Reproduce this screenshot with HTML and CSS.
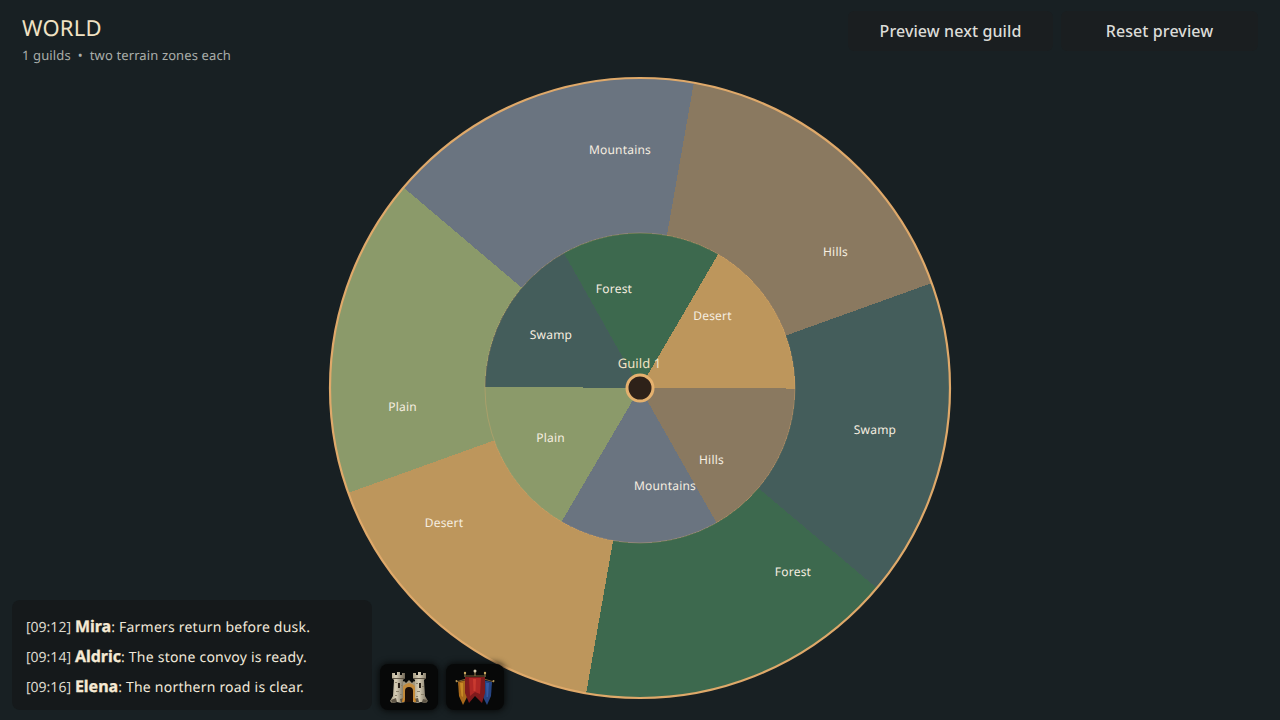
FILE: index.html
```html
<!DOCTYPE html>
<html lang="en">
<head>
<meta charset="utf-8">
<title>World</title>
<link rel="stylesheet" href="styles.css">
</head>
<body>
<main class="page">
  <svg class="wheel" viewBox="0 0 1280 720" width="1280" height="720" aria-label="World wheel">
    <g class="ring">
      <path class="t-mountains" d="M640 388 L403.57 187.5 A310 310 0 0 1 693.83 82.71 Z"/>
      <path class="t-hills" d="M640 388 L693.83 82.71 A310 310 0 0 1 932.04 283 Z"/>
      <path class="t-swamp" d="M640 388 L932.04 283 A310 310 0 0 1 876.78 588.09 Z"/>
      <path class="t-forest" d="M640 388 L876.78 588.09 A310 310 0 0 1 586.17 693.29 Z"/>
      <path class="t-desert" d="M640 388 L586.17 693.29 A310 310 0 0 1 347.96 493 Z"/>
      <path class="t-plain" d="M640 388 L347.96 493 A310 310 0 0 1 403.57 187.5 Z"/>
    </g>
    <circle class="rim" cx="640" cy="388" r="310"/>
    <g class="ring">
      <path class="t-forest" d="M640 388 L563.91 252.96 A155 155 0 0 1 718.2 254.17 Z"/>
      <path class="t-desert" d="M640 388 L718.2 254.17 A155 155 0 0 1 795 388.54 Z"/>
      <path class="t-hills" d="M640 388 L795 388.54 A155 155 0 0 1 716.56 522.77 Z"/>
      <path class="t-mountains" d="M640 388 L716.56 522.77 A155 155 0 0 1 561.57 521.69 Z"/>
      <path class="t-plain" d="M640 388 L561.57 521.69 A155 155 0 0 1 485 386.65 Z"/>
      <path class="t-swamp" d="M640 388 L485 386.65 A155 155 0 0 1 563.91 252.96 Z"/>
    </g>
    <circle class="rim-inner" cx="640" cy="388" r="155"/>
    <g class="labels">
      <text x="620" y="153.500">Mountains</text>
      <text x="835.500" y="255.500">Hills</text>
      <text x="875" y="433.500">Swamp</text>
      <text x="793" y="575.500">Forest</text>
      <text x="444" y="526.500">Desert</text>
      <text x="402.500" y="410.500">Plain</text>
      <text x="614" y="292.500">Forest</text>
      <text x="712.500" y="319.500">Desert</text>
      <text x="711.500" y="463.500">Hills</text>
      <text x="665" y="489.500">Mountains</text>
      <text x="550.500" y="441.500">Plain</text>
      <text x="551" y="338.500">Swamp</text>
    </g>
    <text class="guild-name" x="639.500" y="368">Guild 1</text>
    <circle class="hub" cx="640" cy="388" r="13"/>
  </svg>

  <header class="hud-top">
    <div class="heading">
      <h1 class="title">WORLD</h1>
      <p class="subtitle">1 guilds &nbsp;•&nbsp; two terrain zones each</p>
    </div>
    <div class="actions">
      <button class="btn btn-next" type="button">Preview next guild</button>
      <button class="btn btn-reset" type="button">Reset preview</button>
    </div>
  </header>

  <footer class="hud-bottom">
    <section class="chat">
      <p class="line"><span class="time">[09:12]</span> <b class="who">Mira</b>: Farmers return before dusk.</p>
      <p class="line"><span class="time">[09:14]</span> <b class="who">Aldric</b>: The stone convoy is ready.</p>
      <p class="line"><span class="time">[09:16]</span> <b class="who">Elena</b>: The northern road is clear.</p>
    </section>
    <div class="slots">
      <div class="slot">
        <svg viewBox="0 0 40 36" width="40" height="36" aria-label="Castle">
          <defs>
            <linearGradient id="stone" x1="0" x2="1" y1="0" y2="0">
              <stop offset="0" stop-color="#a89d84"/>
              <stop offset="0.4" stop-color="#d8cfb8"/>
              <stop offset="1" stop-color="#6f6655"/>
            </linearGradient>
          </defs>
          <path fill="#a3987f" d="M12 14 15 12 17 14 20 11 23 14 25 12 28 14V31H12Z"/>
          <path fill="#c48a3a" d="M13 33V22Q13 15 20 14 27 15 27 22V33H24V22Q24 18 20 18 16 18 16 22V33Z"/>
          <path fill="#1a0c05" d="M16 33V22Q16 18 20 18 24 18 24 22V33Z"/>
          <path fill="url(#stone)" d="M3 4H6V6H8V3H11V6H13V4H16V9L14 11V27L16 33 12 34 8 33 3 34 1 32 4 27 5 11 3 9Z"/>
          <path fill="url(#stone)" d="M24 4H27V6H29V3H32V6H34V4H37V9L35 11 36 27 39 32 37 34 32 33 28 34 24 33 26 27V11L24 9Z"/>
          <path fill="#2a2118" d="M9 14H11V19H9ZM30 14H32V19H30Z"/>
          <path fill="#5d5445" d="M3 9H16V10H3ZM24 9H37V10H24ZM2 31 7 29 8 33 3 34ZM11 30 15 29 16 33 12 34ZM25 30 29 29 30 33 25 34ZM34 30 38 31 37 34 33 33Z"/>
          <path fill="#8a8069" d="M6 13H8V14H6ZM12 16H14V17H12ZM7 22H10V23H7ZM11 25H13V26H11ZM6 26H8V27H6ZM27 14H29V15H27ZM33 17H35V18H33ZM28 22H31V23H28ZM32 25H35V26H32ZM27 27H29V28H27Z"/>
          <path fill="#d0892c" d="M13 33H15L16 30 14 28ZM25 33H27L26 28 24 30Z"/>
        </svg>
      </div>
      <div class="slot">
        <svg viewBox="0 0 40 36" width="40" height="36" aria-label="Banners">
          <path fill="none" stroke="#7d5f34" stroke-width="1" d="M1 13 11 10M29 10 39 13M11 7H29"/>
          <path fill="none" stroke="#8c7448" stroke-width="1.200" d="M10 3V8M30 3V8M20 3V7"/>
          <circle cx="20" cy="2" r="1.500" fill="#d8ccae"/>
          <circle cx="10" cy="4" r="1.200" fill="#c9a860"/>
          <circle cx="30" cy="4" r="1.200" fill="#c9a860"/>
          <circle cx="1.500" cy="12" r="1" fill="#b89a58"/>
          <circle cx="38.500" cy="12" r="1" fill="#b89a58"/>
          <path fill="#a8681a" d="M3 13 11 11 13 26 8 36 4 27Z"/>
          <path fill="#c98a26" d="M5 14H8L8 28 6.500 27Z"/>
          <path fill="#264482" d="M28 11 37 13 36 27 32 36 27 26Z"/>
          <path fill="#345aa4" d="M31 14H34L33 28 31.500 28Z"/>
          <path fill="#7f1a1c" d="M10 8H30V24L27 34 20 27 14 34 10 24Z"/>
          <path fill="#b02826" d="M14 9H26L25 25 20 23 15 27Z"/>
          <path fill="#c93a30" d="M18 10H21L20.500 22H18.500Z"/>
        </svg>
      </div>
    </div>
  </footer>
</main>
</body>
</html>
```

FILE: styles.css
```css
* { box-sizing: border-box; }

html, body {
  margin: 0;
  width: 1280px;
  height: 720px;
  overflow: hidden;
}

body {
  background: #182023;
  color: #f3e9d6;
  font-family: "Noto Sans", "Liberation Sans", sans-serif;
  text-rendering: geometricPrecision;
}

.page {
  position: relative;
  width: 1280px;
  height: 720px;
  display: flex;
  flex-direction: column;
  justify-content: space-between;
}

.wheel {
  position: absolute;
  inset: 0;
  display: block;
}

.ring path { shape-rendering: crispEdges; }

.t-mountains { fill: #6a7480; }
.t-hills { fill: #8a7960; }
.t-swamp { fill: #445d5b; }
.t-forest { fill: #3d694e; }
.t-desert { fill: #bd965c; }
.t-plain { fill: #8b9a6a; }

.rim {
  fill: none;
  stroke: #dfa96a;
  stroke-width: 2.2;
}

.rim-inner {
  fill: none;
  stroke: #dfa96a;
  stroke-opacity: 0.35;
  stroke-width: 1;
}

.labels text {
  fill: #f6eee0;
  font-size: 12px;
  letter-spacing: 0.2px;
  text-anchor: middle;
}

.guild-name {
  fill: #f0e2c4;
  font-size: 13px;
  letter-spacing: 0.1px;
  text-anchor: middle;
}

.hub {
  fill: #2e2119;
  stroke: #e5b16e;
  stroke-width: 3;
}

.hud-top {
  position: relative;
  display: flex;
  justify-content: space-between;
  align-items: flex-start;
  padding: 10px 22px 0 22px;
}

.title {
  margin: 0;
  font-size: 22px;
  line-height: 36px;
  font-weight: 400;
  letter-spacing: 0.2px;
  color: #f0e2c4;
}

.subtitle {
  margin: 0;
  font-size: 13px;
  line-height: 18px;
  letter-spacing: 0.12px;
  color: #aaaeaa;
}

.actions {
  display: flex;
  gap: 8px;
  margin-top: 1px;
}

.btn {
  height: 40px;
  border: 0;
  border-radius: 6px;
  background: #1a1e20;
  color: #dcdcd8;
  font: 500 16px "Noto Sans", "Liberation Sans", sans-serif;
  letter-spacing: 0.1px;
  padding: 0;
}

.btn-next { width: 205px; }
.btn-reset { width: 197px; }

.hud-bottom {
  position: relative;
  display: flex;
  align-items: flex-end;
  gap: 8px;
  padding: 0 0 10px 12px;
}

.chat {
  width: 360px;
  height: 110px;
  padding: 11px 14px;
  border-radius: 8px;
  background: #15191b;
  display: flex;
  flex-direction: column;
}

.line {
  margin: 0;
  font-size: 14px;
  line-height: 30px;
  height: 30px;
  letter-spacing: 0.22px;
  color: #f0e8da;
}

.time {
  letter-spacing: 0;
  color: #dcd8cc;
}

.who {
  font-size: 16px;
  font-weight: 700;
  letter-spacing: 0;
  color: #f6ead4;
  -webkit-text-stroke: 0.3px #f6ead4;
}

.slots {
  display: flex;
  gap: 8px;
}

.slot {
  width: 58px;
  height: 46px;
  border-radius: 8px;
  background: #070808;
  box-shadow: 0 0 6px 1px #070808;
  display: flex;
  align-items: center;
  justify-content: center;
}
```
